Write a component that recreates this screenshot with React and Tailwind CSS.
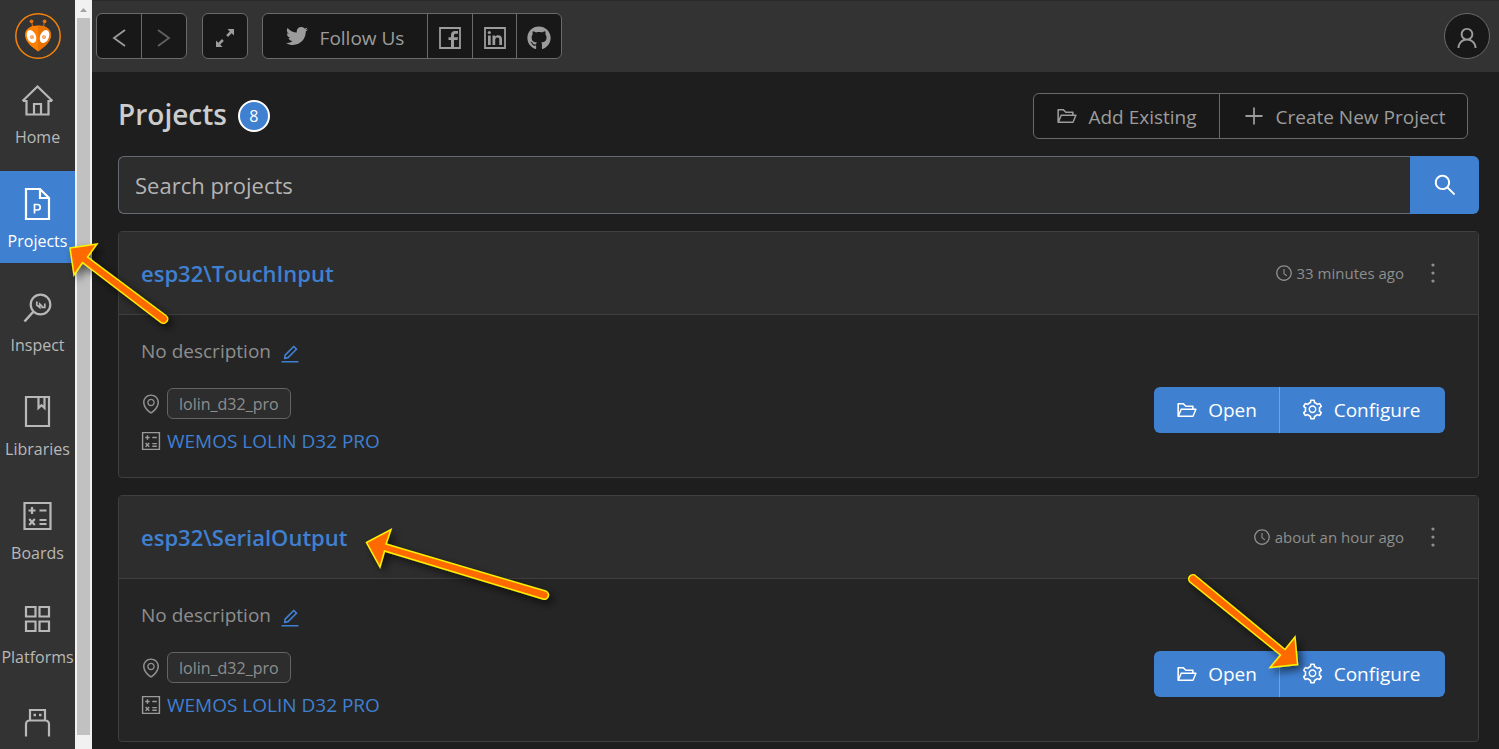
import React from "react";
import {
  AiOutlineFolderOpen,
  AiOutlineSetting,
  AiOutlineClockCircle,
  AiOutlineEnvironment,
  AiOutlineSearch,
  AiOutlinePlus,
  AiOutlineUser,
  AiOutlineEdit,
} from "react-icons/ai";
import { FaTwitter, FaGithub } from "react-icons/fa";

function Logo() {
  return (
    <svg width="46" height="46" viewBox="0 0 46 46" fill="none" aria-hidden="true" className="shrink-0">
      <circle cx="23" cy="23" r="22.2" stroke="#f5820b" strokeWidth="1.5" />
      <path d="M18 15 16.600 8.500M28 15 29.600 8.500" stroke="#b5651a" strokeWidth="1.2" />
      <circle cx="16.500" cy="8.300" r="1.900" fill="#e8730c" />
      <circle cx="29.600" cy="8.300" r="1.900" fill="#e8730c" />
      <path d="M23 12.500c7.500 0 13 3.200 13 9.500 0 7-7 12-13 16.500C17 34 10 29 10 22c0-6.300 5.500-9.500 13-9.500Z" fill="#ff7f00" />
      <path d="M23 12.500c7.500 0 13 3.200 13 9.500 0 7-7 12-13 16.500Z" fill="#e87300" />
      <ellipse cx="16.500" cy="23.500" rx="4.400" ry="6.800" transform="rotate(-22 16.500 23.500)" fill="#fff" />
      <ellipse cx="29.500" cy="23.500" rx="4.400" ry="6.800" transform="rotate(22 29.500 23.500)" fill="#fff" />
      <circle cx="17" cy="24" r="1.300" stroke="#f08020" strokeWidth="1.100" />
      <circle cx="29" cy="24" r="1.300" stroke="#f08020" strokeWidth="1.100" />
    </svg>
  );
}

function Glyph({ children }) {
  return (
    <svg width="35" height="34" viewBox="0 0 35 34" fill="none" stroke="currentColor" strokeWidth="2.200" aria-hidden="true" className="shrink-0">
      {children}
    </svg>
  );
}

function HomeIcon() {
  return (
    <Glyph>
      <path d="M2.500 18 17.500 3.500l15 14.500M3 18h3.500v13.500h22V18H32M14 31.500V21h7v10.500" />
    </Glyph>
  );
}

function ProjectIcon() {
  return (
    <Glyph>
      <path d="M6 2h14l9 9v21H6ZM20 2v9h9" />
      <path d="M14.500 26.500v-9h3a2.700 2.700 0 0 1 0 5.500h-3" strokeWidth="1.700" />
    </Glyph>
  );
}

function InspectIcon() {
  return (
    <Glyph>
      <circle cx="20.500" cy="13.500" r="9.800" />
      <path d="M13.500 20.500 4.500 30.500" strokeWidth="2.600" />
      <path d="M16.800 10.500v3.500l3 2.500v-3.500l3.500 3.500M24.800 12.500v4h-3.500" strokeWidth="1.700" />
    </Glyph>
  );
}

function LibraryIcon() {
  return (
    <Glyph>
      <path d="M6 2h23v29H6Z" />
      <path d="M18.500 3v10l3-2.700 3 2.700V3" />
    </Glyph>
  );
}

function BoardIcon({ small }) {
  return (
    <svg
      width={small ? 22 : 35}
      height={small ? 22 : 34}
      viewBox="0 0 34 34"
      fill="none"
      stroke="currentColor"
      strokeWidth="2.200"
      aria-hidden="true"
      className={small ? "-mx-px shrink-0" : "shrink-0"}
    >
      <path d="M4 4h26v26H4Z" />
      <path d="M8 11.500h7M11.500 8v7M19 11.500h7M8.700 20l5.600 6M14.300 20l-5.600 6M19 21h7M19 25h7" />
    </svg>
  );
}

function PlatformIcon() {
  return (
    <Glyph>
      <path d="M6 4h9.500v9.500H6ZM19.500 4H29v9.500h-9.500ZM6 18.500h9.500V28H6ZM19.500 18.500H29V28h-9.500Z" />
    </Glyph>
  );
}

function DeviceIcon() {
  return (
    <Glyph>
      <path d="M10 13V3h15v10M6 29.500V17a3.500 3.500 0 0 1 3.500-3.500h16A3.500 3.500 0 0 1 29 17v12.500" />
      <path d="M13.500 8H16M19 8h2.500" strokeWidth="2.500" />
    </Glyph>
  );
}

function ExpandIcon() {
  return (
    <svg width="20" height="20" viewBox="0 0 20 20" fill="currentColor" aria-hidden="true">
      <path d="M12.500 1H19v6.500l-2.300-2.300-3.700 3.700-1.800-1.800 3.600-3.700ZM1 12.500l2.300 2.300 3.700-3.700 1.800 1.800-3.600 3.700L7.500 19H1Z" />
    </svg>
  );
}

function FacebookIcon() {
  return (
    <svg width="22" height="22" viewBox="0 0 22 22" fill="none" aria-hidden="true">
      <path d="M1 1h20v20H1Z" stroke="currentColor" strokeWidth="1.800" />
      <path d="M12 21v-8H9.500v-2.800H12V8c0-2.800 1.500-4 4-4h3v2.800h-2c-1.400 0-2 .5-2 1.700v1.700h4l-.4 2.800H15v8Z" fill="currentColor" />
    </svg>
  );
}

function LinkedinIcon() {
  return (
    <svg width="22" height="22" viewBox="0 0 22 22" fill="none" aria-hidden="true">
      <path d="M1 1h20v20H1Z" stroke="currentColor" strokeWidth="1.800" />
      <path d="M4 8.500h2.700V18H4ZM8.500 8.500h2.600v1.300c.6-1 1.600-1.500 3-1.500 2.700 0 3.900 1.500 3.900 4.200V18h-2.700v-5c0-1.600-.5-2.400-1.900-2.400-1.500 0-2.200 1-2.200 2.600V18H8.500Z" fill="currentColor" />
      <circle cx="5.300" cy="5.500" r="1.600" fill="currentColor" />
    </svg>
  );
}

function Chevron({ d }) {
  return (
    <svg width="14" height="18" viewBox="0 0 14 18" fill="none" stroke="currentColor" strokeWidth="1.800" aria-hidden="true">
      <path d={d} />
    </svg>
  );
}

const navItems = [
  { label: "Home", Icon: HomeIcon },
  { label: "Projects", Icon: ProjectIcon, active: true },
  { label: "Inspect", Icon: InspectIcon },
  { label: "Libraries", Icon: LibraryIcon },
  { label: "Boards", Icon: BoardIcon },
  { label: "Platforms", Icon: PlatformIcon },
  { label: "Devices", Icon: DeviceIcon, iconOnly: true },
];

function Sidebar() {
  return (
    <aside className="flex w-[75px] shrink-0 flex-col items-center overflow-hidden bg-[#333333] pt-[13px]">
      <Logo />
      <nav className="mt-2 flex w-full flex-col gap-3">
        {navItems.map(({ label, Icon, active, iconOnly }) => (
          <a
            key={label}
            href="#"
            aria-label={label}
            className={
              active
                ? "flex h-[92px] shrink-0 flex-col items-center gap-2 bg-[#3f80d1] pt-4 text-base leading-6 text-white"
                : "flex h-[92px] shrink-0 flex-col items-center gap-2 pt-4 text-base leading-6 text-[#b8b8b8]"
            }
          >
            <Icon />
            {iconOnly ? null : label}
          </a>
        ))}
      </nav>
    </aside>
  );
}

function Scrollbar() {
  return (
    <div className="flex w-[17px] shrink-0 flex-col items-center bg-[#f1f1f1] pb-[14px]" aria-hidden="true">
      <svg width="17" height="18" viewBox="0 0 17 18">
        <path d="M5 12 8.500 8 12 12Z" fill="#a3a3a3" />
      </svg>
      <div className="w-[13px] flex-1 bg-[#c1c1c1]" />
    </div>
  );
}

const groupClass = "flex h-[46px] overflow-hidden rounded-md border border-[#6a6a6a] bg-[#181818] text-[#9c9c9c]";

function TopBar() {
  return (
    <header className="flex h-[72px] shrink-0 items-center border-t border-[#292929] bg-[#333333] pr-[9px] pb-px pl-1">
      <div className={groupClass}>
        <button aria-label="Back" className="flex w-11 items-center justify-center pt-1">
          <Chevron d="M13 1 2 9l11 8" />
        </button>
        <button aria-label="Forward" className="flex w-[45px] items-center justify-center border-l border-[#6a6a6a] pt-1 text-[#616161]">
          <Chevron d="m1 1 11 8-11 8" />
        </button>
      </div>
      <button aria-label="Expand" className="ml-[15px] flex size-[46px] items-center justify-center rounded-md border border-[#6a6a6a] bg-[#181818] pt-1 text-[#9c9c9c]">
        <ExpandIcon />
      </button>
      <div className={groupClass + " ml-[14px]"}>
        <button className="flex w-[164px] items-center justify-center gap-3 text-[19px]">
          <FaTwitter size={22} />
          <span className="pt-1">Follow Us</span>
        </button>
        <a href="#" aria-label="Facebook" className="flex w-[45px] items-center justify-center border-l border-[#6a6a6a] pt-1">
          <FacebookIcon />
        </a>
        <a href="#" aria-label="LinkedIn" className="flex w-11 items-center justify-center border-l border-[#6a6a6a] pt-1">
          <LinkedinIcon />
        </a>
        <a href="#" aria-label="GitHub" className="flex w-[45px] items-center justify-center border-l border-[#6a6a6a] pt-1">
          <FaGithub size={24} />
        </a>
      </div>
      <button aria-label="Account" className="ml-auto flex size-[46px] items-center justify-center rounded-full border border-[#6a6a6a] bg-[#181818] pt-1 text-[#9c9c9c]">
        <AiOutlineUser size={26} />
      </button>
    </header>
  );
}

function ProjectCard({ name, time }) {
  return (
    <article className="rounded-sm border border-[#3f3f3f] bg-[#252525]">
      <div className="flex h-[83px] items-center border-b border-[#3f3f3f] bg-[#2d2d2d] pr-9 pl-[22px]">
        <h2 className="text-[22px] font-semibold text-[#3f80d1]">
          <a href="#">{name}</a>
        </h2>
        <span className="ml-auto flex items-center gap-1 text-[15px] text-[#8e8e8e]">
          <AiOutlineClockCircle size={18} />
          {time}
        </span>
        <button aria-label="More actions" className="ml-5 flex w-[18px] justify-center text-[#8e8e8e]">
          <svg width="4" height="20" viewBox="0 0 4 20" fill="currentColor" aria-hidden="true">
            <circle cx="2" cy="2" r="1.600" />
            <circle cx="2" cy="10" r="1.600" />
            <circle cx="2" cy="18" r="1.600" />
          </svg>
        </button>
      </div>
      <div className="flex items-center justify-between pt-[22px] pr-[33px] pb-[22px] pl-[22px]">
        <div>
          <p className="flex h-7 items-center gap-2 text-[19px] text-[#8e8e8e]">
            No description
            <a href="#" aria-label="Edit description" className="pt-1.5 text-[#3f80d1]">
              <AiOutlineEdit size={22} />
            </a>
          </p>
          <div className="mt-[23px] flex h-[31px] items-center gap-[6px] text-[#8e8e8e]">
            <AiOutlineEnvironment size={22} className="-mx-px" />
            <span className="flex h-[31px] items-center rounded-md border border-[#636363] bg-[#2d2d2d] px-[11px] text-base">
              lolin_d32_pro
            </span>
          </div>
          <div className="mt-2 flex h-7 items-center gap-[6px] text-[#9a9a9a]">
            <BoardIcon small />
            <a href="#" className="text-[19px] text-[#3f80d1]">WEMOS LOLIN D32 PRO</a>
          </div>
        </div>
        <div className="mt-[27px] flex h-[46px] overflow-hidden rounded-md bg-[#3f80d1] text-[19px] text-white">
          <button className="flex w-[125px] items-center justify-center gap-[10px]">
            <AiOutlineFolderOpen size={22} />
            <span className="pt-0.5">Open</span>
          </button>
          <button className="flex w-[166px] items-center justify-center gap-[10px] border-l border-[#6fa4e4] pr-1">
            <AiOutlineSetting size={23} />
            <span className="pt-0.5">Configure</span>
          </button>
        </div>
      </div>
    </article>
  );
}

const arrows = [
  "M70 248 97 244 87.500 257 165.800 315.500A4 4 0 0 1 161 322.500L82.500 262.500 74 275Z",
  "M366.500 542.500 391 529.500 386 544 545.500 591A4 4 0 0 1 543 599L384.500 551 380 567Z",
  "M1297.500 664.500 1295 637 1285 649.500 1195.800 576A4 4 0 0 0 1190 582L1280.500 655 1270 667.500Z",
];

function Arrows() {
  return (
    <svg className="pointer-events-none absolute top-0 left-0 h-[749px] w-[1499px]" viewBox="0 0 1499 749" aria-hidden="true">
      <defs>
        <filter id="shadow" x="-20%" y="-20%" width="150%" height="150%">
          <feDropShadow dx="4" dy="4" stdDeviation="4" floodColor="#000" floodOpacity="0.600" />
        </filter>
      </defs>
      {arrows.map((d) => (
        <path key={d} d={d} fill="#ff6a00" stroke="#fff200" strokeWidth="1.500" filter="url(#shadow)" />
      ))}
    </svg>
  );
}

export default function App() {
  return (
    <div className="relative flex h-screen overflow-hidden bg-[#1e1e1e] font-['Open_Sans','Noto_Sans',sans-serif]">
      <Sidebar />
      <Scrollbar />
      <div className="flex min-w-0 flex-1 flex-col">
        <TopBar />
        <main className="flex flex-col pt-[21px] pr-5 pl-[26px]">
          <div className="flex items-center pr-[11px]">
            <h1 className="pb-1 text-[28px] leading-10 font-semibold text-[#cccccc]">Projects</h1>
            <span className="ml-[11px] flex size-8 items-center justify-center rounded-full border-2 border-white bg-[#3f80d1] text-base text-white">
              8
            </span>
            <div className={groupClass + " ml-auto text-[19px]"}>
              <button className="flex w-[185px] items-center justify-center gap-[10px]">
                <AiOutlineFolderOpen size={22} />
                <span className="pt-0.5">Add Existing</span>
              </button>
              <button className="flex w-[248px] items-center justify-center gap-[10px] border-l border-[#6a6a6a]">
                <AiOutlinePlus size={24} />
                <span className="pt-0.5">Create New Project</span>
              </button>
            </div>
          </div>
          <form className="mt-[17px] flex h-[58px]" onSubmit={(e) => e.preventDefault()}>
            <input
              type="text"
              aria-label="Search projects"
              placeholder="Search projects"
              className="min-w-0 flex-1 rounded-l-md border border-r-0 border-[#656a73] bg-[#2d2d2d] px-4 text-[22px] text-[#cccccc] outline-none placeholder:text-[#b4b4b4]"
            />
            <button aria-label="Search" className="flex w-[69px] items-center justify-center rounded-r-md bg-[#3f80d1] text-white">
              <AiOutlineSearch size={26} />
            </button>
          </form>
          <div className="mt-[17px] flex flex-col gap-[17px]">
            <ProjectCard name="esp32\TouchInput" time="33 minutes ago" />
            <ProjectCard name="esp32\SerialOutput" time="about an hour ago" />
          </div>
        </main>
      </div>
      <Arrows />
    </div>
  );
}
